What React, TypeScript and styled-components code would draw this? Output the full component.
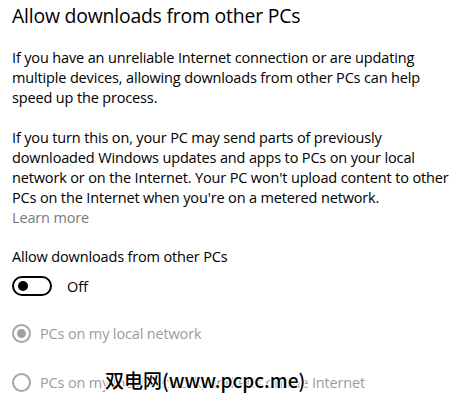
import React from "react";
import styled, { createGlobalStyle } from "styled-components";

const Global = createGlobalStyle`
  html, body { margin: 0; padding: 0; background: #fff; }
  body { font-family: "Open Sans", "Noto Sans", sans-serif; color: #000; }
`;

const Page = styled.div`
  position: relative;
  width: 455px;
  height: 400px;
  overflow: hidden;
  padding: 2px 0 0 12px;
  box-sizing: border-box;
  display: flex;
  flex-direction: column;
`;

const Title = styled.h1`
  margin: 0;
  font-size: 19.4px;
  font-weight: 400;
  line-height: 28px;
  letter-spacing: -0.2px;
`;

const Para = styled.p<{ $top: number }>`
  margin: ${(p) => p.$top}px 0 0;
  font-size: 14.5px;
  line-height: 20px;
  letter-spacing: -0.15px;
  white-space: nowrap;
`;

const Link = styled.div`
  font-size: 14.5px;
  line-height: 20px;
  color: #7a7a7a;
  letter-spacing: -0.15px;
`;

const Label = styled.div`
  margin-top: 19px;
  font-size: 14.5px;
  line-height: 20px;
  letter-spacing: -0.15px;
`;

const ToggleRow = styled.div`
  display: flex;
  align-items: center;
  gap: 15px;
  margin-top: 9px;
  font-size: 14.5px;
`;

const Track = styled.div`
  width: 40px;
  height: 20px;
  border: 2px solid #000;
  border-radius: 10px;
  box-sizing: border-box;
  display: flex;
  align-items: center;
  padding-left: 4px;
`;

const Knob = styled.div`
  width: 10px;
  height: 10px;
  border-radius: 50%;
  background: #000;
`;

const RadioRow = styled.div<{ $top: number }>`
  display: flex;
  align-items: center;
  gap: 9px;
  margin-top: ${(p) => p.$top}px;
  font-size: 14.5px;
  color: #9c9c9c;
  letter-spacing: -0.15px;
`;

const Radio = styled.div<{ $checked?: boolean }>`
  width: 19px;
  height: 19px;
  border: 2px solid #a6a6a6;
  border-radius: 50%;
  box-sizing: border-box;
  display: flex;
  align-items: center;
  justify-content: center;
  &::after {
    content: "";
    display: ${(p) => (p.$checked ? "block" : "none")};
    width: 9px;
    height: 9px;
    border-radius: 50%;
    background: #a0a0a0;
  }
`;

const Watermark = styled.div`
  position: absolute;
  left: 105px;
  top: 366px;
  font-family: "Noto Sans CJK SC", sans-serif;
  font-size: 19px;
  font-weight: 500;
  color: #000;
  text-shadow: 1px 1px 0 #fff, -1px -1px 0 #fff, 1px -1px 0 #fff, -1px 1px 0 #fff;
  letter-spacing: 0px;
  white-space: nowrap;
`;

export default function App() {
  return (
    <>
      <Global />
      <Page>
        <Title>Allow downloads from other PCs</Title>
        <Para $top={18}>
          If you have an unreliable Internet connection or are updating
          <br />
          multiple devices, allowing downloads from other PCs can help
          <br />
          speed up the process.
        </Para>
        <Para $top={20}>
          If you turn this on, your PC may send parts of previously
          <br />
          downloaded Windows updates and apps to PCs on your local
          <br />
          network or on the Internet. Your PC won't upload content to other
          <br />
          PCs on the Internet when you're on a metered network.
        </Para>
        <Link>Learn more</Link>
        <Label>Allow downloads from other PCs</Label>
        <ToggleRow>
          <Track>
            <Knob />
          </Track>
          Off
        </ToggleRow>
        <RadioRow $top={28}>
          <Radio $checked />
          PCs on my local network
        </RadioRow>
        <RadioRow $top={30}>
          <Radio />
          PCs on my local network, and PCs on the Internet
        </RadioRow>
        <Watermark>双电网(www.pcpc.me)</Watermark>
      </Page>
    </>
  );
}
